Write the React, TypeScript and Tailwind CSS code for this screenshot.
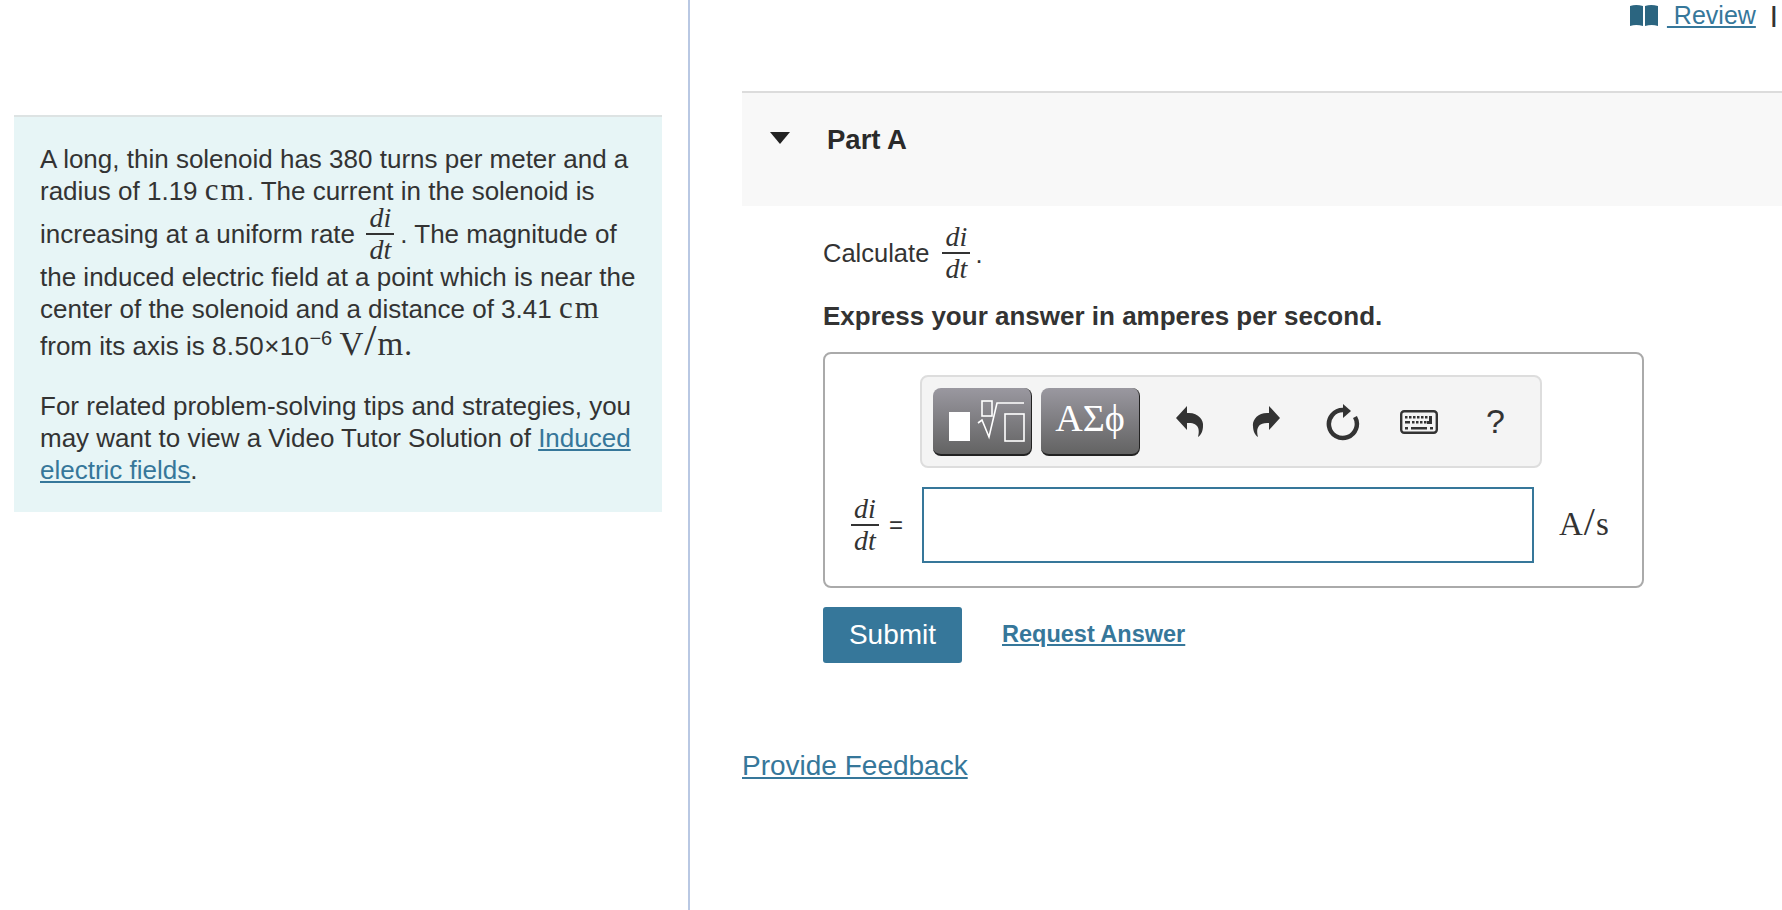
import React from "react";

function Frac({ size = "text-[28px]", w = "w-[28px]", h = "h-[54px]" }: { size?: string; w?: string; h?: string }) {
  return (
    <span className={`inline-flex flex-col items-center justify-center align-[16px] ${h} ${size} leading-[30px] italic font-['Liberation_Serif',serif]`}>
      <span className="block">di</span>
      <span className={`block ${w} h-[2px] shrink-0 bg-[#333]`} />
      <span className="block">dt</span>
    </span>
  );
}

function Unit({ children }: { children: React.ReactNode }) {
  return <span className="font-['Liberation_Serif',serif] text-[31px] leading-[29px] tracking-[2px]">{children}</span>;
}

function Link({ children, className = "" }: { children: React.ReactNode; className?: string }) {
  return <a className={`text-[#36779a] underline underline-offset-2 ${className}`}>{children}</a>;
}

function TemplateIcon() {
  return (
    <svg width="97" height="66" viewBox="0 0 97 66" fill="none" stroke="#fff" strokeWidth="1.6">
      <rect x="15" y="24" width="21" height="29" fill="#fff" stroke="none" />
      <rect x="48" y="13" width="10" height="15" />
      <path d="M44 35l4-3 7 17 8-34h27" />
      <rect x="71" y="26" width="19" height="27" />
    </svg>
  );
}

function UndoIcon({ flip = false }: { flip?: boolean }) {
  return (
    <svg width="28" height="32" viewBox="0 0 28 32" className={flip ? "-scale-x-100" : ""}>
      <path d="M0 12L11 0V7C22 6 28 14 27 20C27 25 25 29 22 31C24 24 23 16 11 17V24Z" fill="#333" />
    </svg>
  );
}

function ResetIcon() {
  return (
    <svg width="36" height="38" viewBox="0 0 36 38" fill="none">
      <path d="M18 7A14 14 0 1 0 30 14" stroke="#333" strokeWidth="4.5" />
      <path d="M18 1l8 7-8 7z" fill="#333" />
    </svg>
  );
}

function KeyboardIcon() {
  const top = [5, 9, 13, 17, 21, 25];
  const mid = [12, 16, 20, 24];
  return (
    <svg width="38" height="24" viewBox="0 0 38 24" fill="none">
      <rect x="1.2" y="1.2" width="35.6" height="21.6" rx="3" fill="#f4f4f4" stroke="#333" strokeWidth="2.4" />
      {top.map((x) => <rect key={x} x={x} y="6" width="2.5" height="2.5" fill="#333" />)}
      <rect x="5" y="11" width="5" height="2.5" fill="#333" />
      {mid.map((x) => <rect key={x} x={x} y="11" width="2.5" height="2.5" fill="#333" />)}
      <rect x="29" y="6" width="3" height="8" fill="#333" />
      <rect x="27" y="11" width="5" height="3" fill="#333" />
      <rect x="5" y="17" width="3" height="2.5" fill="#333" />
      <rect x="11" y="17" width="16" height="2.5" fill="#333" />
      <rect x="30" y="17" width="3" height="2.5" fill="#333" />
    </svg>
  );
}

function BookIcon() {
  return (
    <svg width="28" height="22" viewBox="0 0 28 22" className="shrink-0">
      <path d="M0 2q6-2 13 0v20q-7-2-13 0z" fill="#2b6580" />
      <path d="M15 2q6-2 13 0v20q-6-2-13 0z" fill="#2b6580" />
    </svg>
  );
}

const toolBtn =
  "h-[68px] w-[99px] rounded-lg border-b-2 border-r border-[#222] bg-gradient-to-b from-[#9a98a0] to-[#636363] flex items-center justify-center";

export default function App() {
  return (
    <div className="flex h-[910px] overflow-hidden bg-white text-[#333] font-['Liberation_Sans',sans-serif]">
      <div className="w-[690px] shrink-0 border-r-2 border-[#b9c8e3] pl-[14px] pt-[115px]">
        <div className="w-[648px] h-[397px] border-t-2 border-[#dde3e3] bg-[#e7f5f6] px-[26px] pt-[26px] text-[26px] leading-[32px]">
          <p>
            A long, thin solenoid has 380 turns per meter and a radius of 1.19 <Unit>cm</Unit>. The current in the
            solenoid is increasing at a uniform rate <span className="ml-[4px] mr-[6px]"><Frac /></span>. The magnitude of the induced electric field at a point
            which is near the center of the solenoid and a distance of 3.41 <Unit>cm</Unit> from its axis is{" "}
            <span className="tracking-[0.4px]">8.50×10</span>
            <sup className="text-[20px] leading-none -top-[10px] relative align-baseline">−6</sup>{" "}
            <span className="font-['Liberation_Serif',serif] text-[33px] leading-[32px] tracking-[1px]">
              V<span className="text-[44px] font-light leading-[32px]">/</span>m
            </span>
            <Unit>.</Unit>
          </p>
          <p className="mt-[28px]">
            For related problem-solving tips and strategies, you may want to view a Video Tutor Solution of{" "}
            <Link>Induced electric fields</Link>.
          </p>
        </div>
      </div>

      <div className="flex-1 pl-[52px]">
        <div className="h-[91px] flex justify-end items-start gap-[8px] pr-[5px] text-[25px] leading-[30px]">
          <span className="flex items-center h-[30px]"><BookIcon /></span>
          <span className="ml-[1px]"><Link>&nbsp;Review</Link></span>
          <span className="ml-[7px] text-[#333] text-[22px] font-bold">|</span>
        </div>

        <div className="h-[115px] border-t-2 border-[#dcdcdc] bg-[#f8f8f8] flex items-start pt-[31px]">
          <svg width="20" height="12" viewBox="0 0 20 12" className="ml-[28px] mt-[8px]">
            <path d="M0 0h20L10 12z" fill="#222" />
          </svg>
          <h2 className="ml-[37px] text-[27.5px] leading-[32px] font-bold text-[#2a2a2a]">Part A</h2>
        </div>

        <div className="pl-[81px]">
          <div className="mt-[17px] h-[60px] flex items-center text-[25.5px]">
            Calculate&nbsp;
            <span className="ml-[6px] flex"><Frac h="h-[60px]" /></span>
            <span className="self-end mb-[10px] ml-[5px]">.</span>
          </div>
          <p className="mt-[17px] text-[26px] leading-[32px] font-bold">Express your answer in amperes per second.</p>

          <div className="mt-[20px] h-[236px] w-[821px] rounded-lg border-2 border-[#aaa] pl-[95px] pt-[21px] relative">
            <div className="h-[93px] w-[622px] rounded-lg border-2 border-[#ddd] bg-[#f4f4f4] flex items-center pl-[11px]">
              <button className={toolBtn}><TemplateIcon /></button>
              <button className={`${toolBtn} pb-[4px] ml-[9px] text-white text-[38px] font-['Liberation_Serif',serif]`}>ΑΣϕ</button>
              <div className="ml-[36px] w-[28px] flex justify-center"><UndoIcon /></div>
              <div className="ml-[48px] w-[28px] flex justify-center"><UndoIcon flip /></div>
              <div className="ml-[45px] w-[36px] flex justify-center"><ResetIcon /></div>
              <div className="ml-[39px] w-[38px] flex justify-center"><KeyboardIcon /></div>
              <div className="ml-[48px] text-[34px] text-[#333]">?</div>
            </div>
            <div className="mt-[19px] flex items-center">
              <div className="-ml-[69px] flex items-center w-[68px]">
                <Frac h="h-[60px]" />
                <span className="ml-[10px] text-[24px]">=</span>
              </div>
              <input className="ml-[3px] h-[76px] w-[612px] border-2 border-[#36779a] bg-white outline-none" />
              <span className="ml-[25px] text-[33px] font-['Liberation_Serif',serif] tracking-[1px]">
                A<span className="text-[40px] leading-[33px] font-light">/</span>s
              </span>
            </div>
          </div>

          <div className="mt-[19px] flex items-center">
            <button className="h-[56px] w-[139px] rounded-[3px] bg-[#36779a] text-white text-[28px]">Submit</button>
            <Link className="ml-[40px] text-[23.5px] font-bold">Request Answer</Link>
          </div>
        </div>

        <div className="mt-[86px]">
          <Link className="text-[28px] leading-[34px]">Provide Feedback</Link>
        </div>
      </div>
    </div>
  );
}
